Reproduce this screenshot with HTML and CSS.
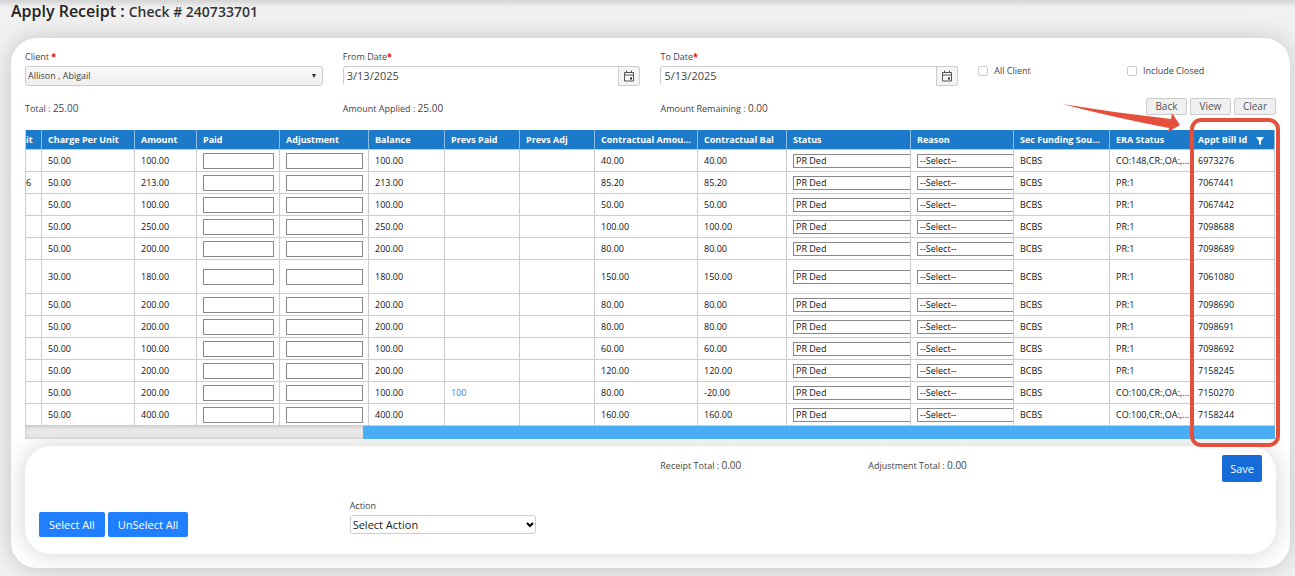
FILE: index.html
```html
<!DOCTYPE html>
<html lang="en">
  <head>
    <meta charset="UTF-8" />
    <meta name="viewport" content="width=device-width, initial-scale=1.0" />
    <title>Apply Receipt</title>
    <link rel="stylesheet" href="styles.css">
  </head>
  <body>
    <h1>Apply Receipt : <span>Check # 240733701</span></h1>
    <main class="card">
      <form class="filters"><!-- Search filters -->
        <div class="field">
          <label for="client">Client <b class="req">*</b></label>
          <div class="client-box">
            <select id="client">
              <option>Allison , Abigail</option>
            </select>
          </div>
        </div>
        <div class="field">
          <label for="fromDate">From Date<b class="req">*</b></label>
          <div class="date-box">
            <input type="text" id="fromDate" value="3/13/2025">
            <button type="button" aria-label="Open calendar">
              <svg viewBox="0 0 12 12" width="12" height="12"><path d="M1.5 2.5h9v8.5h-9zM1.5 5h9M3.5 .5v2M8.5 .5v2" fill="none" stroke="#555"/><path d="M7 7.5h2v2h-2z" fill="#222"/></svg>
            </button>
          </div>
        </div>
        <div class="field">
          <label for="toDate">To Date<b class="req">*</b></label>
          <div class="date-box">
            <input type="text" id="toDate" value="5/13/2025">
            <button type="button" aria-label="Open calendar">
              <svg viewBox="0 0 12 12" width="12" height="12"><path d="M1.5 2.5h9v8.5h-9zM1.5 5h9M3.5 .5v2M8.5 .5v2" fill="none" stroke="#555"/><path d="M7 7.5h2v2h-2z" fill="#222"/></svg>
            </button>
          </div>
        </div>
        <div class="check">
          <input type="checkbox" id="allClient">
          <label for="allClient">All Client</label>
        </div>
        <div class="check">
          <input type="checkbox" id="includeClosed">
          <label for="includeClosed">Include Closed</label>
        </div>
      </form>

      <div class="totals"><!-- Receipt totals -->
        <p>Total : <span>25.00</span></p>
        <p>Amount Applied : <span>25.00</span></p>
        <p>Amount Remaining : <span>0.00</span></p>
        <div class="actions">
          <button type="button">Back</button>
          <button type="button">View</button>
          <button type="button">Clear</button>
        </div>
      </div>

      <div class="grid">
        <table>
          <colgroup>
            <col class="c-unit"><col class="c-charge"><col class="c-amount"><col class="c-paid"><col class="c-adjust">
            <col class="c-balance"><col class="c-prev"><col class="c-prev"><col class="c-contract"><col class="c-bal">
            <col class="c-status"><col class="c-reason"><col class="c-fund"><col class="c-era"><col class="c-bill">
          </colgroup>
          <thead>
            <tr>
              <th>it</th>
              <th>Charge Per Unit</th>
              <th>Amount</th>
              <th>Paid</th>
              <th>Adjustment</th>
              <th>Balance</th>
              <th>Prevs Paid</th>
              <th>Prevs Adj</th>
              <th>Contractual Amou...</th>
              <th>Contractual Bal</th>
              <th>Status</th>
              <th>Reason</th>
              <th>Sec Funding Sou...</th>
              <th>ERA Status</th>
              <th>Appt Bill Id <svg class="filter" viewBox="0 0 8 8" width="8" height="8"><path d="M0 0h8L5 4v4L3 7V4z" fill="#fff"/></svg></th>
            </tr>
          </thead>
          <tbody id="rows"></tbody>
        </table>
        <div class="scroll"><div class="thumb"></div></div>
        <!-- Callout for the bill id column -->
        <div class="callout"></div>
        <svg class="arrow" viewBox="0 0 120 32" width="120" height="32"><path d="M1 3Q55 12 110 18L111 12 119 24 107 31 108 27Q55 17 1 3z" fill="#e5503c"/></svg>
      </div>

      <section class="card footer-card">
        <div class="sums">
          <p class="receipt-total">Receipt Total : <span>0.00</span></p>
          <p>Adjustment Total : <span>0.00</span></p>
          <button type="button" class="save">Save</button>
        </div>
        <div class="bulk">
          <div class="bulk-buttons">
            <button type="button">Select All</button>
            <button type="button">UnSelect All</button>
          </div>
          <div class="field">
            <label for="action">Action</label>
            <div class="action-box">
              <select id="action">
                <option>Select Action</option>
              </select>
              <svg viewBox="0 0 8 6" width="8" height="6"><path d="M1 1l3 3 3-3" fill="none" stroke="#000" stroke-width="2"/></svg>
            </div>
          </div>
        </div>
      </section>
    </main>
    <script src="script.js"></script>
  </body>
</html>
```

FILE: styles.css
```css
* {
  box-sizing: border-box;
}
body {
  margin: 0;
  padding: 0 5px 8px 11px;
  background: linear-gradient(#d4d4d4, #f1f1f1 8px);
  background-color: #f1f1f1;
  background-repeat: no-repeat;
  color: #444;
  font: 9px/12px "Segoe UI", "Open Sans", "Noto Sans", sans-serif;
}
button, input, select {
  font: inherit;
  color: inherit;
}
p {
  margin: 0;
}
h1 {
  margin: 0 0 15px;
  font-size: 16px;
  line-height: 22px;
  font-weight: 600;
  color: #222;
}
h1 span {
  font-size: 14px;
  color: #333;
}

/* Cards */
.card {
  padding: 13px 14px 14px;
  background: #fff;
  border-radius: 26px;
  box-shadow: 0 0 24px rgba(0, 0, 0, 0.18);
}

/* Filters */
.filters {
  display: grid;
  grid-template-columns: 23.8% 23.8% 23.8% 10.3% 1fr;
  column-gap: 20px;
}
.field label {
  display: block;
  height: 15px;
}
.field .req {
  color: #f00;
  font-weight: bold;
}
.client-box,
.date-box {
  display: flex;
  height: 20px;
  border: 1px solid #ccc;
  border-radius: 3px;
}
.client-box {
  position: relative;
  background: linear-gradient(#f8f8f8, #efefef);
}
.client-box::after {
  content: "";
  position: absolute;
  right: 6px;
  top: 7px;
  border: 2px solid transparent;
  border-top: 4px solid #333;
}
.client-box select {
  flex: 1;
  padding: 0 2px;
  border: 0;
  background: none;
  appearance: none;
}
.date-box {
  border-bottom-color: #fff;
}
.date-box input {
  flex: 1;
  min-width: 0;
  padding: 0 3px;
  border: 0;
  background: none;
  font-size: 11px;
}
.date-box button {
  display: flex;
  align-items: center;
  justify-content: center;
  width: 22px;
  height: 20px;
  margin: -1px;
  padding: 0;
  border: 1px solid #ccc;
  border-radius: 0 3px 3px 0;
  background: #f5f5f5;
}
.check {
  display: flex;
  align-items: center;
  gap: 6px;
  height: 35px;
  padding-top: 4px;
}
.check input {
  appearance: none;
  width: 10px;
  height: 10px;
  margin: 0;
  border: 1px solid #ccc;
  border-radius: 2px;
  background: #fff;
}

/* Totals */
.totals {
  display: grid;
  grid-template-columns: 23.8% 23.8% 23.8% 1fr;
  column-gap: 20px;
  align-items: end;
  margin: 12px 0 15px;
}
.totals span,
.sums span {
  font-size: 10px;
}
.actions {
  display: flex;
  justify-content: flex-end;
  gap: 3px;
}
.actions button {
  min-width: 41px;
  height: 17px;
  padding: 0 8px;
  border: 1px solid #ccc;
  border-radius: 2px;
  background: #f0f0f0;
  font-size: 10px;
  line-height: 15px;
  color: #555;
}

/* Grid */
.grid {
  position: relative;
  margin: 0 1px 7px 0;
}
table {
  width: 100%;
  table-layout: fixed;
  border-collapse: separate;
  border-spacing: 0;
  border-left: 1px solid #ccc;
  color: #111;
}
.c-unit { width: 16px; }
.c-charge { width: 93px; }
.c-amount { width: 62px; }
.c-paid { width: 83px; }
.c-adjust { width: 89px; }
.c-balance { width: 76px; }
.c-prev { width: 75px; }
.c-contract { width: 103px; }
.c-bal { width: 89px; }
.c-status { width: 124px; }
.c-reason { width: 103px; }
.c-fund { width: 96px; }
.c-era { width: 82px; }
.c-bill { width: 83px; }
th, td {
  height: 22px;
  padding: 0 0 0 6px;
  overflow: hidden;
  text-align: left;
  text-overflow: ellipsis;
  white-space: nowrap;
  border-right: 1px solid #ccc;
  border-bottom: 1px solid #ccc;
}
th {
  height: 20px;
  background: #1b7bca;
  color: #fff;
  font-weight: bold;
  border-right-color: #8dbde4;
}
th:first-child,
td:first-child {
  padding: 0;
}
.tall td {
  height: 34px;
}
td input,
td select {
  display: block;
  height: 16px;
  padding: 0 3px;
  border: 1px solid #888;
  border-radius: 0;
  background: #fff;
}
td input {
  width: calc(100% - 5px);
}
td select {
  width: 130px;
  height: 14px;
  padding: 0 2px;
  appearance: none;
}
td a {
  color: #3b82f6;
  text-decoration: none;
}
.filter {
  margin-left: 7px;
  vertical-align: -2px;
}
.scroll {
  height: 13px;
  background: #e8e8e8;
  box-shadow: inset 0 0 4px #bbb;
}
.thumb {
  width: 73%;
  height: 100%;
  margin-left: auto;
  background: #4aacf2;
}
.callout {
  position: absolute;
  top: -12px;
  right: -5px;
  bottom: -8px;
  width: 90px;
  border: 4px solid #e5503c;
  border-radius: 11px;
}
.arrow {
  position: absolute;
  top: -29px;
  right: 94px;
}

/* Bottom card */
.footer-card {
  padding: 9px 14px 17px;
}
.sums {
  display: grid;
  grid-template-columns: 50.8% 17% 1fr auto;
}
.sums p {
  padding-top: 4px;
}
.receipt-total {
  grid-column: 2;
}
.save,
.bulk-buttons button {
  height: 25px;
  padding: 0 10px;
  border: 0;
  border-radius: 2px;
  background: #1f7fff;
  color: #fff;
  font-size: 11px;
}
.save {
  height: 27px;
  padding: 0 8px;
  background: #176bd8;
}
.bulk {
  display: grid;
  grid-template-columns: 25.4% 186px;
  align-items: end;
  margin-top: 18px;
}
.bulk-buttons {
  display: flex;
  gap: 3px;
}
.action-box {
  position: relative;
  margin-bottom: 3px;
}
.action-box select {
  display: block;
  width: 100%;
  height: 19px;
  padding: 0 2px;
  border: 1px solid #ccc;
  border-radius: 3px;
  background: #fff;
  color: #222;
  font-size: 11px;
  appearance: none;
}
.action-box svg {
  position: absolute;
  top: 7px;
  right: 2px;
}
```

FILE: script.js
```js
// charge, amount, balance, prevs paid, contractual amount, contractual bal, era status, bill id
var data = [
  ['50.00', '100.00', '100.00', '', '40.00', '40.00', 'CO:148,CR:,OA:,...', '6973276'],
  ['50.00', '213.00', '213.00', '', '85.20', '85.20', 'PR:1', '7067441'],
  ['50.00', '100.00', '100.00', '', '50.00', '50.00', 'PR:1', '7067442'],
  ['50.00', '250.00', '250.00', '', '100.00', '100.00', 'PR:1', '7098688'],
  ['50.00', '200.00', '200.00', '', '80.00', '80.00', 'PR:1', '7098689'],
  ['30.00', '180.00', '180.00', '', '150.00', '150.00', 'PR:1', '7061080'],
  ['50.00', '200.00', '200.00', '', '80.00', '80.00', 'PR:1', '7098690'],
  ['50.00', '200.00', '200.00', '', '80.00', '80.00', 'PR:1', '7098691'],
  ['50.00', '100.00', '100.00', '', '60.00', '60.00', 'PR:1', '7098692'],
  ['50.00', '200.00', '200.00', '', '120.00', '120.00', 'PR:1', '7158245'],
  ['50.00', '200.00', '100.00', '100', '80.00', '-20.00', 'CO:100,CR:,OA:,...', '7150270'],
  ['50.00', '400.00', '400.00', '', '160.00', '160.00', 'CO:100,CR:,OA:,...', '7158244']
];
var html = '';
for (var i = 0; i < data.length; i++) {
  var d = data[i];
  html += `
    <tr class="${i == 5 ? 'tall' : ''}">
      <td>${i == 1 ? '6' : ''}</td>
      <td>${d[0]}</td>
      <td>${d[1]}</td>
      <td><input type="text" aria-label="Paid"></td>
      <td><input type="text" aria-label="Adjustment"></td>
      <td>${d[2]}</td>
      <td>${d[3] ? '<a href="#">' + d[3] + '</a>' : ''}</td>
      <td></td>
      <td>${d[4]}</td>
      <td>${d[5]}</td>
      <td><select aria-label="Status"><option>PR Ded</option></select></td>
      <td><select aria-label="Reason"><option>--Select--</option></select></td>
      <td>BCBS</td>
      <td>${d[6]}</td>
      <td>${d[7]}</td>
    </tr>`;
}
document.querySelector('#rows').innerHTML = html;
```
